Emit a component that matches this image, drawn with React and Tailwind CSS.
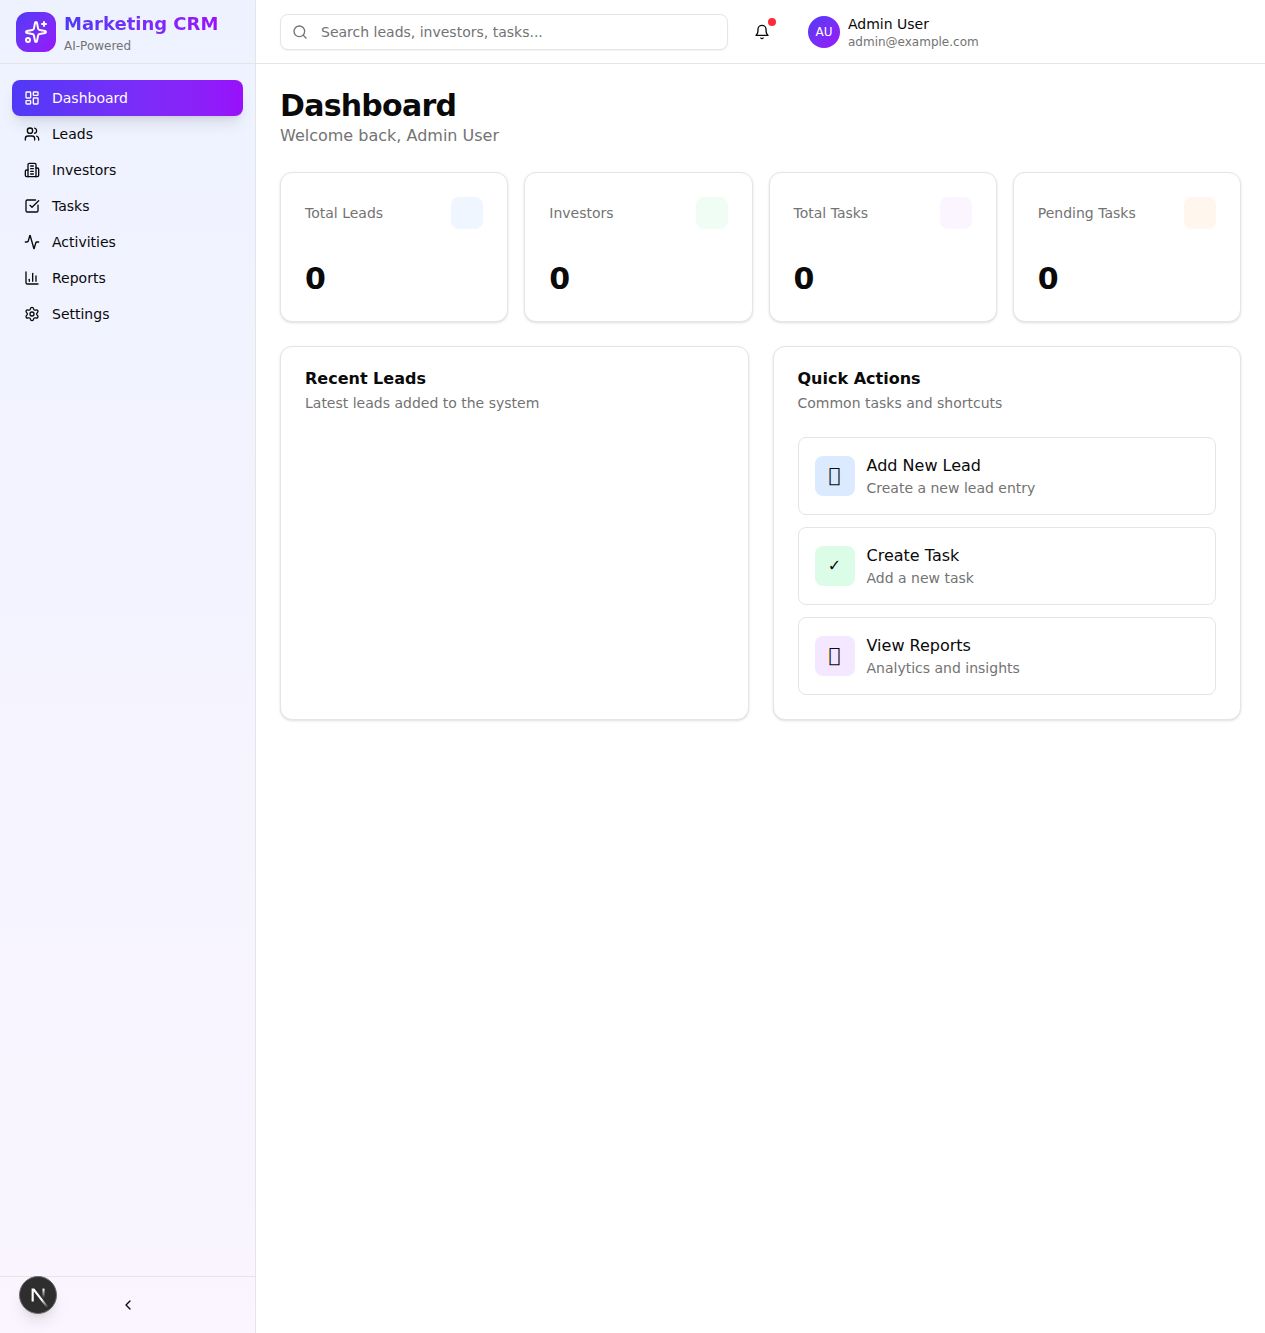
import { Activity, ChartColumn, ChevronLeft, LayoutDashboard, Search, Settings, Sparkles, SquareCheckBig, Users } from 'lucide-react';

// the taller building glyph the reference uses
function InvestorsIcon({ size = 16 }) {
    return (
        <svg width={size} height={size} viewBox="0 0 24 24" fill="none" stroke="currentColor" strokeWidth="2" strokeLinecap="round" strokeLinejoin="round">
            <path d="M6 22V4a2 2 0 0 1 2-2h8a2 2 0 0 1 2 2v18Z" />
            <path d="M6 12H4a2 2 0 0 0-2 2v6a2 2 0 0 0 2 2h2" />
            <path d="M18 9h2a2 2 0 0 1 2 2v9a2 2 0 0 1-2 2h-2" />
            <path d="M10 6h4" />
            <path d="M10 10h4" />
            <path d="M10 14h4" />
            <path d="M10 18h4" />
        </svg>
    );
}

function BellIcon({ size = 16 }) {
    return (
        <svg width={size} height={size} viewBox="0 0 24 24" fill="none" stroke="currentColor" strokeWidth="2" strokeLinecap="round" strokeLinejoin="round">
            <path d="M6 8a6 6 0 0 1 12 0c0 7 3 9 3 9H3s3-2 3-9" />
            <path d="M10.3 21a1.94 1.94 0 0 0 3.4 0" />
        </svg>
    );
}

const navItems = [
    { icon: LayoutDashboard, label: 'Dashboard', active: true },
    { icon: Users, label: 'Leads' },
    { icon: InvestorsIcon, label: 'Investors' },
    { icon: SquareCheckBig, label: 'Tasks' },
    { icon: Activity, label: 'Activities' },
    { icon: ChartColumn, label: 'Reports' },
    { icon: Settings, label: 'Settings' },
];

const stats = [
    { label: 'Total Leads', tint: 'bg-blue-50' },
    { label: 'Investors', tint: 'bg-green-50' },
    { label: 'Total Tasks', tint: 'bg-purple-50' },
    { label: 'Pending Tasks', tint: 'bg-orange-50' },
];

const actions = [
    { glyph: '\uE000', glyphClass: 'text-xl pb-[2px]', title: 'Add New Lead', text: 'Create a new lead entry', tint: 'bg-blue-100' },
    { glyph: '✓', glyphClass: 'text-base', title: 'Create Task', text: 'Add a new task', tint: 'bg-green-100' },
    { glyph: '\uE000', glyphClass: 'text-xl pb-[2px]', title: 'View Reports', text: 'Analytics and insights', tint: 'bg-purple-100' },
];

function Sidebar() {
    return (
        <aside className="w-[256px] shrink-0 flex flex-col border-r border-[#e5e5e5] bg-gradient-to-b from-[#eef2ff] to-[#faf5ff]">
            {/* Logo */}
            <div className="h-[64px] flex items-center gap-2 px-4 border-b border-[#e5e5e5]">
                <div className="w-10 h-10 rounded-xl flex items-center justify-center bg-gradient-to-br from-[#4f39f6] to-[#9810fa]">
                    <Sparkles size={24} strokeWidth={2} className="text-white" />
                </div>
                <div>
                    <div className="text-lg leading-[28px] font-bold bg-gradient-to-r from-[#4f39f6] to-[#9810fa] bg-clip-text text-transparent">Marketing CRM</div>
                    <div className="text-xs leading-[16px] text-[#737373]">AI-Powered</div>
                </div>
            </div>

            {/* Nav */}
            <nav className="flex-1 px-3 pt-4">
                {navItems.map((item) => (
                    <div
                        key={item.label}
                        className={`h-9 flex items-center gap-3 px-3 rounded-lg text-sm ${item.active ? 'text-white bg-gradient-to-r from-[#4f39f6] to-[#9810fa] shadow-lg' : 'text-[#0a0a0a]'}`}
                    >
                        <item.icon size={16} strokeWidth={2} />
                        <span>{item.label}</span>
                    </div>
                ))}
            </nav>

            {/* Collapse */}
            <div className="h-[57px] border-t border-[#e5e5e5] flex items-center justify-center">
                <ChevronLeft size={16} strokeWidth={2} className="text-[#0a0a0a]" />
            </div>
        </aside>
    );
}

function Topbar() {
    return (
        <header className="h-[64px] shrink-0 flex items-center px-6 border-b border-[#e5e5e5]">
            <div className="relative w-[448px] mr-4">
                <Search size={16} strokeWidth={2} className="absolute left-3 top-[10px] text-[#737373]" />
                <input
                    placeholder="Search leads, investors, tasks..."
                    className="w-full h-9 pl-10 pr-3 text-sm rounded-lg border border-[#e5e5e5] bg-white shadow-xs outline-none placeholder:text-[#737373]"
                />
            </div>
            <div className="relative w-9 h-9 flex items-center justify-center mr-7 text-[#0a0a0a]">
                <BellIcon size={16} />
                <span className="absolute top-1 right-1 w-2 h-2 rounded-full bg-[#fb2c36]" />
            </div>
            <div className="flex items-center gap-2">
                <div className="w-8 h-8 rounded-full flex items-center justify-center text-xs text-white bg-gradient-to-br from-[#4f39f6] to-[#9810fa]">AU</div>
                <div>
                    <div className="text-sm leading-[20px] text-[#0a0a0a]">Admin User</div>
                    <div className="text-xs leading-[16px] text-[#737373]">admin@example.com</div>
                </div>
            </div>
        </header>
    );
}

export default function App() {
    return (
        <div className="relative flex h-[1333px] bg-white text-[#0a0a0a] font-['DejaVu_Sans',sans-serif] overflow-hidden">
            <Sidebar />

            <div className="flex-1 min-w-0 flex flex-col">
                <Topbar />

                <main className="p-6">
                    <h1 className="text-3xl leading-[36px] font-bold tracking-tight">Dashboard</h1>
                    <p className="text-base leading-[24px] text-[#737373]">Welcome back, Admin User</p>

                    {/* Stat cards */}
                    <div className="grid grid-cols-4 gap-4 mt-6">
                        {stats.map((stat) => (
                            <div key={stat.label} className="h-[150px] rounded-xl border border-[#e5e5e5] bg-white shadow-sm p-6">
                                <div className="flex items-center justify-between">
                                    <span className="text-sm text-[#737373]">{stat.label}</span>
                                    <div className={`w-8 h-8 rounded-lg ${stat.tint}`} />
                                </div>
                                <div className="text-3xl leading-[36px] font-bold mt-8">0</div>
                            </div>
                        ))}
                    </div>

                    <div className="grid grid-cols-2 gap-6 mt-6">
                        <div className="h-[374px] rounded-xl border border-[#e5e5e5] bg-white shadow-sm px-6 pt-[20px]">
                            <h2 className="text-base leading-[24px] font-bold">Recent Leads</h2>
                            <p className="text-sm leading-[20px] text-[#737373] mt-[2px]">Latest leads added to the system</p>
                        </div>

                        <div className="h-[374px] rounded-xl border border-[#e5e5e5] bg-white shadow-sm px-6 pt-[20px]">
                            <h2 className="text-base leading-[24px] font-bold">Quick Actions</h2>
                            <p className="text-sm leading-[20px] text-[#737373] mt-[2px]">Common tasks and shortcuts</p>
                            <div className="flex flex-col gap-3 mt-6">
                                {actions.map((action) => (
                                    <div key={action.title} className="h-[78px] flex items-center gap-3 px-4 rounded-lg border border-[#e5e5e5]">
                                        <div className={`w-10 h-10 shrink-0 rounded-lg flex items-center justify-center ${action.glyphClass} ${action.tint}`}>{action.glyph}</div>
                                        <div>
                                            <div className="text-base leading-[24px]">{action.title}</div>
                                            <div className="text-sm leading-[20px] text-[#737373]">{action.text}</div>
                                        </div>
                                    </div>
                                ))}
                            </div>
                        </div>
                    </div>
                </main>
            </div>

            {/* Dev tools badge */}
            <div className="absolute left-[19px] top-[1276px] w-[38px] h-[38px] rounded-full bg-[#2e2e2e] border border-[#6b6b6b] shadow-lg flex items-center justify-center">
                <svg width="32" height="32" viewBox="0 0 180 180" fill="none">
                    <defs>
                        <linearGradient id="n-diag" gradientUnits="userSpaceOnUse" x1="109" y1="116.5" x2="144.5" y2="160.5">
                            <stop stopColor="#fff" />
                            <stop offset="1" stopColor="#fff" stopOpacity="0" />
                        </linearGradient>
                        <linearGradient id="n-stem" gradientUnits="userSpaceOnUse" x1="121" y1="54" x2="120.8" y2="106.9">
                            <stop stopColor="#fff" />
                            <stop offset="1" stopColor="#fff" stopOpacity="0" />
                        </linearGradient>
                    </defs>
                    <path d="M149.508 157.52L69.142 54H54V125.97H66.1136V69.3836L139.999 164.845C143.333 162.614 146.509 160.165 149.508 157.52Z" fill="url(#n-diag)" />
                    <rect x="115" y="54" width="12" height="72" fill="url(#n-stem)" />
                </svg>
            </div>
        </div>
    );
}
